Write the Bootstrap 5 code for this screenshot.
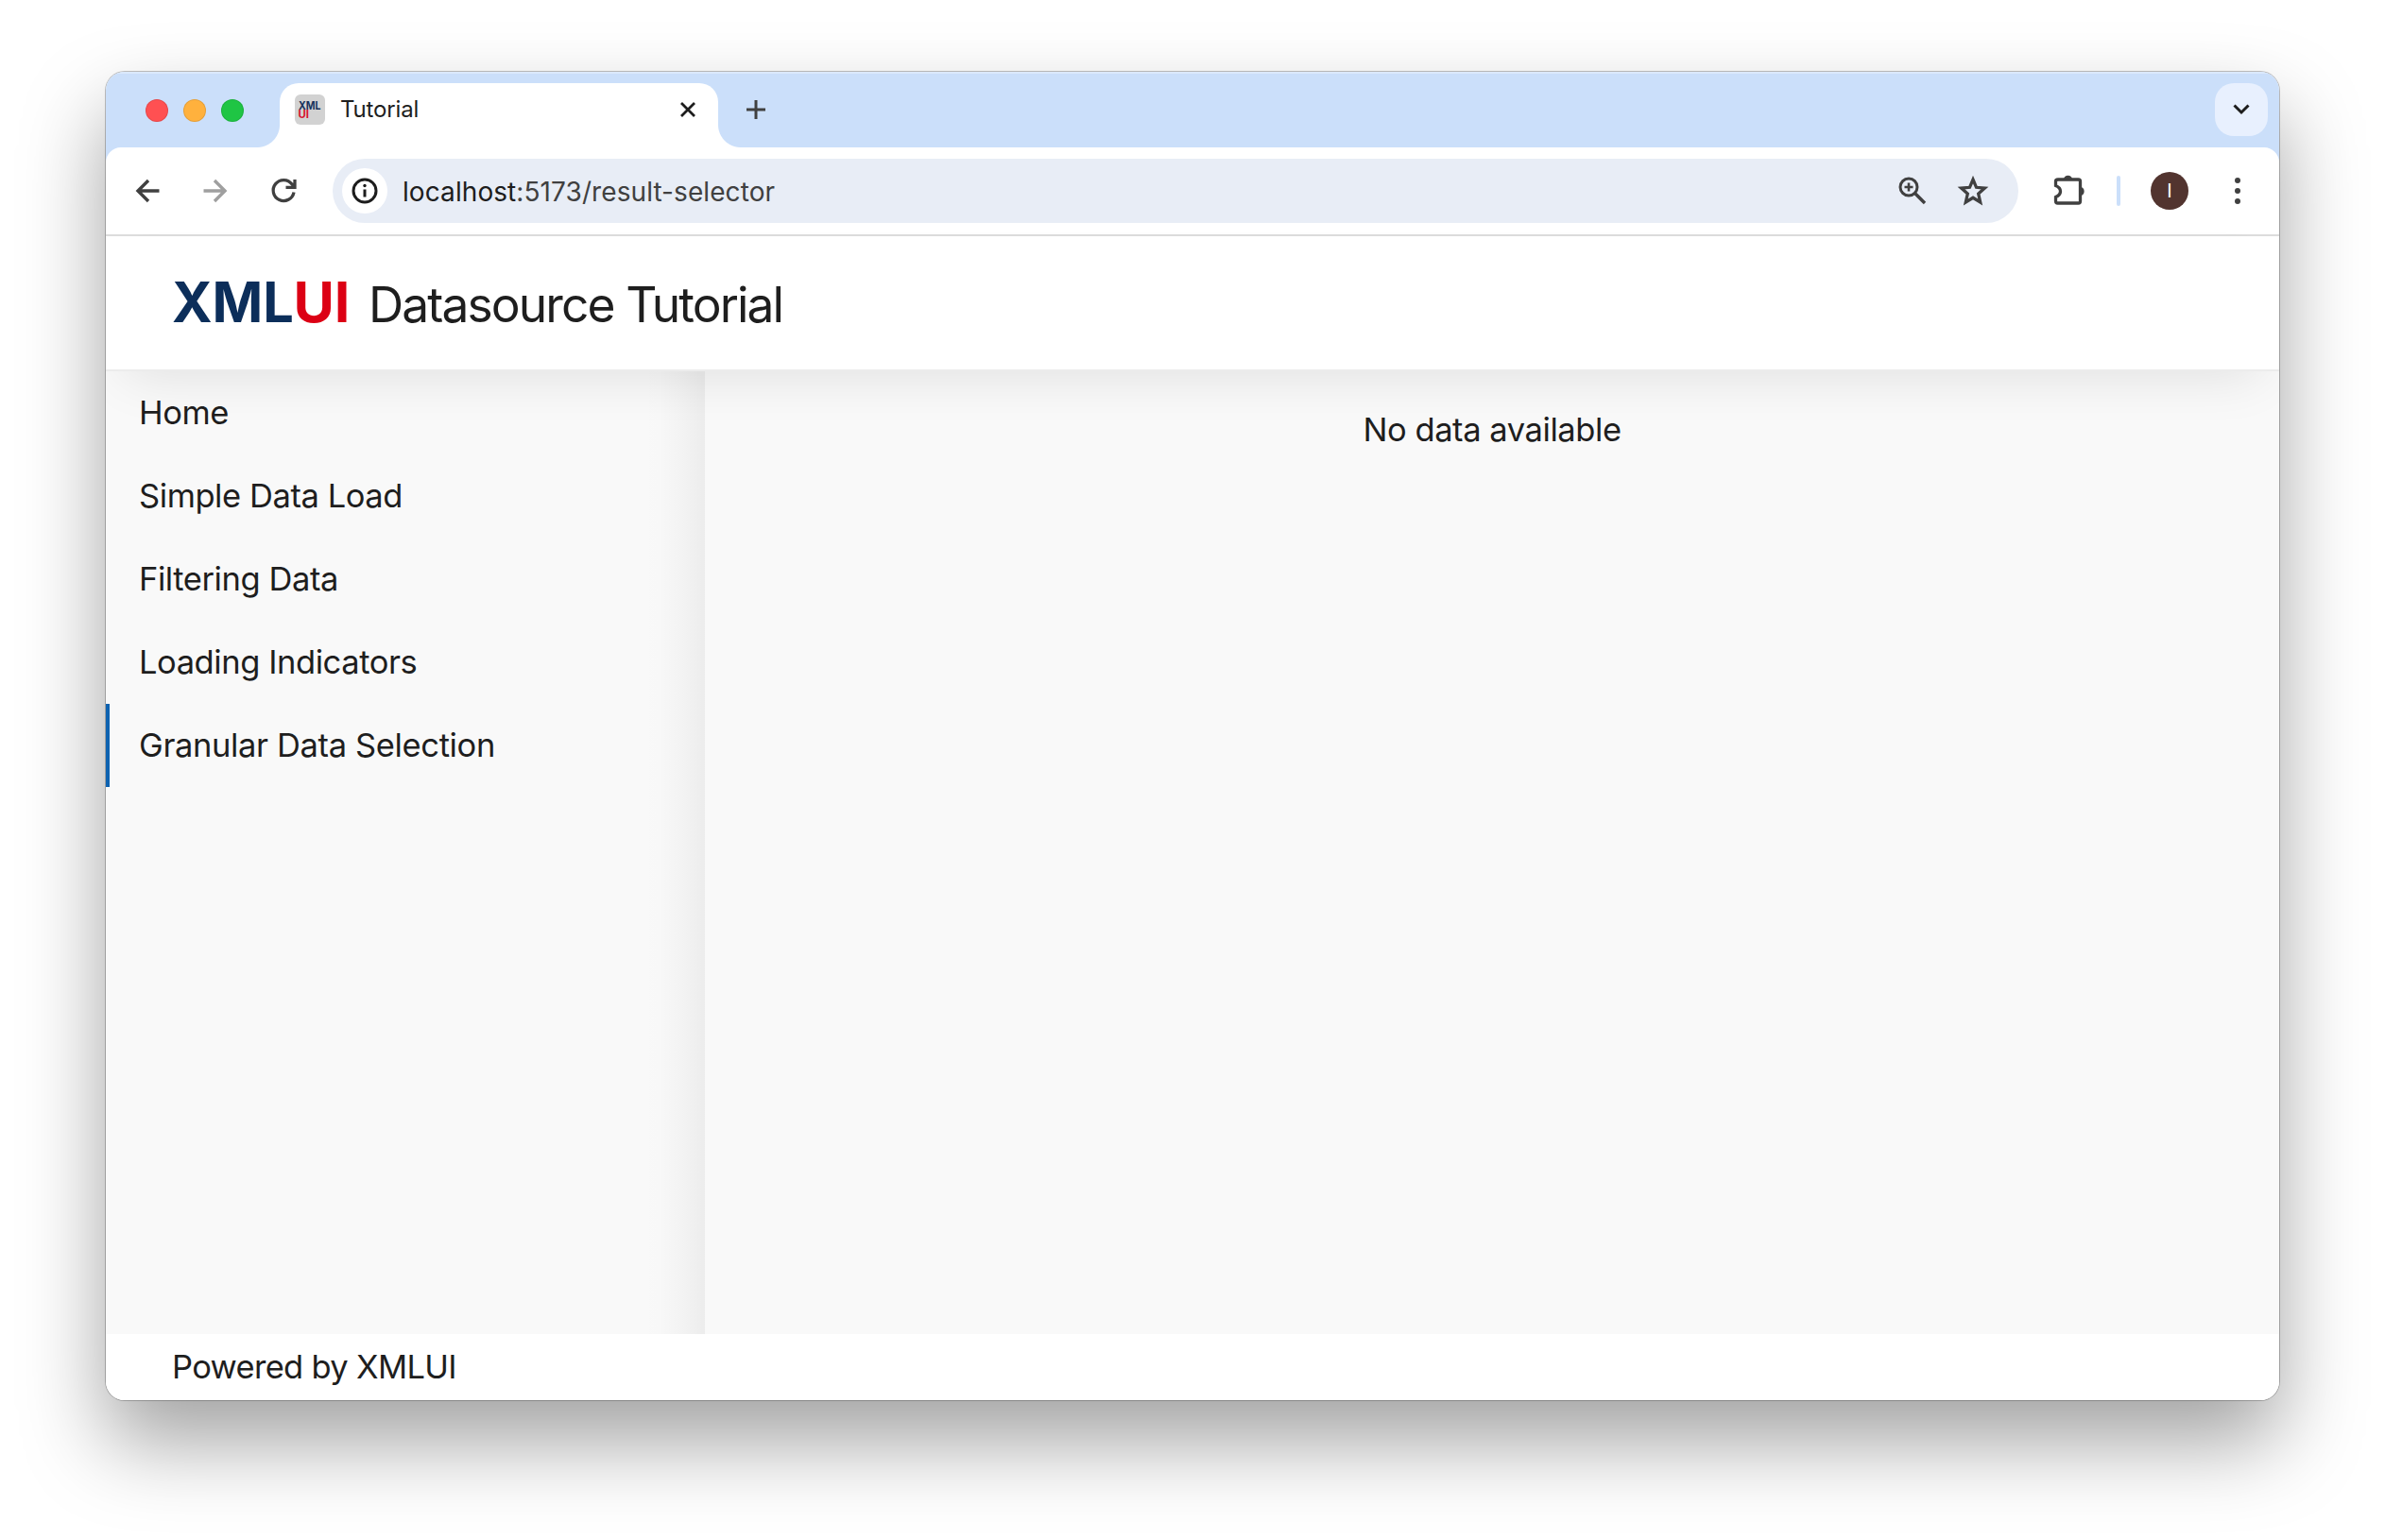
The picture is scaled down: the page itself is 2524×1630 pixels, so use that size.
<!DOCTYPE html>
<html lang="en">
<head>
<meta charset="utf-8">
<meta name="viewport" content="width=device-width, initial-scale=1">
<title>Tutorial</title>
<link href="https://cdn.jsdelivr.net/npm/bootstrap@5.3.0/dist/css/bootstrap.min.css" rel="stylesheet">
<style>
body{background:#fff;font-family:Inter,"Liberation Sans",sans-serif;color:#1e1e1e;padding:76px 112px 0;overflow:hidden;height:1630px}
svg{display:block;flex:none}
.window{width:2300px;height:1406px;border-radius:20px;background:#fff;box-shadow:0 0 0 1px rgba(0,0,0,.24),0 44px 88px rgba(0,0,0,.37)}
.clip{border-radius:20px;overflow:hidden;height:100%}
.tabstrip{height:80px;background:#cbdffa;padding:12px 12px 0 42px;box-shadow:inset 0 2px 0 #dbe9fc}
.lights{padding-top:12px}
.light{width:24px;height:24px;border-radius:50%;margin-top:5px;box-shadow:inset 0 0 0 1px rgba(0,0,0,.1)}
.light-red{background:#ff5052}
.light-amber{background:#ffb13d}
.light-green{background:#1fc544}
.tab{width:464px;height:68px;background:#fff;border-radius:20px 20px 0 0;margin-left:38px;padding:0 24px 0 16px;position:relative}
.tab::before,.tab::after{content:"";position:absolute;bottom:0;width:24px;height:24px}
.tab::before{left:-24px;background:radial-gradient(circle at 0 0,transparent 23.5px,#fff 24.5px)}
.tab::after{right:-24px;background:radial-gradient(circle at 100% 0,transparent 23.5px,#fff 24.5px)}
.favicon{margin-top:4px}
.tabtitle{font-size:24px;line-height:32px;margin:4px 0 0 16px;letter-spacing:-.15px}
.tabclose{margin-top:12px}
.newtab{margin:18px 0 0 30px}
.tabmenu{width:56px;height:56px;border-radius:20px;background:#e8f0fe}
.toolbarwrap{background:#cbdffa}
.toolbar{height:94px;background:#fff;border-radius:16px 16px 0 0;border-bottom:2px solid #dcdcdc;padding:0 30px}
.navicon{margin-right:44px}
.address{width:1784px;height:68px;border-radius:34px;background:#e8edf6;padding:0 31px 0 10px;margin-left:-6px}
.siteinfo{width:48px;height:48px;border-radius:50%;background:#fff}
.url{font-size:28px;line-height:40px;color:#404040;margin:1px 0 0 16px;letter-spacing:.08px}
.url b{font-weight:400;color:#1d1d1d}
.star{margin-left:32px}
.puzzle{margin:-2px 0 0 36px}
.avatar{width:40px;height:40px;border-radius:50%;background:#52342f;color:#fff;font-size:20px;margin-left:32px}
.sep{width:4px;height:32px;border-radius:2px;background:#cbdffa;margin-left:32px}
.kebab{margin-left:48px}
.apphead{height:143px;border-bottom:2px solid #ececec;padding-left:65px;background:#fff;position:relative;z-index:1;box-shadow:0 24px 56px -20px rgba(0,0,0,.105)}
.title{font-size:51.5px;line-height:60px;letter-spacing:-1.9px;margin:3px 0 0 17px}
.appbody{background:#f9f9f9;height:1019px;font-size:34.5px;letter-spacing:-.43px}
.side{width:634px;background:linear-gradient(to left,rgba(0,0,0,.052),rgba(0,0,0,.022) 26px,rgba(0,0,0,.005) 50px,transparent 68px)}
.side .nav-link{height:88px;padding:0 0 0 31px;border-left:4px solid transparent;color:#1e1e1e;line-height:88px}
.side .nav-link.active{border-color:#0d62b0;letter-spacing:-.36px}
.content{padding-top:36px}
.appfoot{height:70px;background:#fff;padding-left:70px;font-size:34.5px;letter-spacing:-.68px}
</style>
<script src="https://cdn.jsdelivr.net/npm/bootstrap@5.3.0/dist/js/bootstrap.bundle.min.js"></script>
</head>
<body>
<div class="window"><div class="clip d-flex flex-column">
  <div class="tabstrip d-flex align-items-start">
    <div class="lights d-flex gap-3">
      <span class="light light-red"></span>
      <span class="light light-amber"></span>
      <span class="light light-green"></span>
    </div>
    <div class="tab d-flex align-items-start pt-2">
      <svg class="favicon" width="32" height="32" viewBox="0 0 32 32"><rect y="4" width="0" height="0"/><rect width="32" height="32" rx="6" fill="#d2d2d2"/><g font-family="Inter" font-weight="700" font-size="11.5"><text x="4" y="15.8" fill="#16325c" textLength="23.5" lengthAdjust="spacingAndGlyphs">XML</text><text x="3.5" y="24.8" fill="#d8102c" textLength="11.5" lengthAdjust="spacingAndGlyphs">UI</text></g></svg>
      <span class="tabtitle">Tutorial</span>
      <svg class="tabclose ms-auto" width="16" height="16" viewBox="0 0 16 16" stroke="#1d1d1d" stroke-width="2.8"><path d="M1 1L15 15M15 1L1 15"/></svg>
    </div>
    <svg class="newtab" width="20" height="20" viewBox="0 0 20 20" stroke="#404040" stroke-width="3"><path d="M0 10H20M10 0V20"/></svg>
    <div class="tabmenu ms-auto d-flex align-items-center justify-content-center"><svg width="18" height="12" viewBox="0 0 18 12" fill="none" stroke="#1d1d1d" stroke-width="3"><path d="M1.5 1.5L9 9L16.5 1.5"/></svg></div>
  </div>
  <div class="toolbarwrap"><div class="toolbar d-flex align-items-center">
    <svg class="navicon" width="28" height="28" viewBox="0 0 28 28" fill="none" stroke="#404040" stroke-width="3.4"><path d="M26.5 14H4.5M15 3L4 14L15 25"/></svg>
    <svg class="navicon" width="28" height="28" viewBox="0 0 28 28" fill="none" stroke="#9f9f9f" stroke-width="3.4"><path d="M1.5 14H23.5M13 3L24 14L13 25"/></svg>
    <svg class="navicon" width="28" height="28" viewBox="0 0 28 28" fill="none" stroke="#404040" stroke-width="3.3"><path d="M25 15.5A11 11 0 1 1 23 7L25.5 9.5M26 2V10.3H16.5"/></svg>
    <div class="address d-flex align-items-center">
      <span class="siteinfo d-flex align-items-center justify-content-center"><svg width="28" height="28" viewBox="0 0 28 28"><circle cx="14" cy="14" r="12" fill="none" stroke="#1d1d1d" stroke-width="3"/><path d="M14 12.5V20.5" stroke="#1d1d1d" stroke-width="3"/><circle cx="14" cy="8.5" r="1.7" fill="#1d1d1d"/></svg></span>
      <span class="url"><b>localhost</b>:5173/result-selector</span>
      <svg class="ms-auto" width="30" height="30" viewBox="0 0 30 30" fill="none" stroke="#404040" stroke-width="3"><circle cx="11" cy="11" r="9"/><path d="M17.5 17.5L28 28" stroke-width="3.4"/><path d="M6.5 11H15.5M11 6.5V15.5" stroke-width="2.6"/></svg>
      <svg class="star" width="34" height="32" viewBox="0 0 34 32" fill="none" stroke="#404040" stroke-width="3.3"><path d="M17 4L20.5 12.3L29.4 13L22.7 19L24.7 28L17 23.3L9.3 28L11.3 19L4.6 13L13.5 12.3Z"/></svg>
    </div>
    <svg class="puzzle" width="36" height="36" viewBox="0 0 36 36"><path d="M6 7H27.5Q29.5 7 29.5 9V30Q29.5 32 27.5 32H5.500Q3.500 32 3.500 30V25.500Q8.500 23.500 8.500 19.500Q8.500 15.500 3.500 13.500V9Q3.500 7 6 7Z" fill="none" stroke="#404040" stroke-width="3.3"/><path d="M12 6.500A4.600 4.600 0 0 1 21 6.500ZM30 15A4.600 4.600 0 0 1 30 24Z" fill="#404040"/></svg>
    <span class="sep"></span>
    <span class="avatar d-flex align-items-center justify-content-center">I</span>
    <svg class="kebab" width="8" height="28" viewBox="0 0 8 28" fill="#404040"><circle cx="4" cy="3" r="3"/><circle cx="4" cy="14" r="3"/><circle cx="4" cy="25" r="3"/></svg>
  </div></div>
  <header class="apphead d-flex align-items-center">
    <svg width="196" height="80" viewBox="0 0 196 80" font-family="Inter" font-weight="700" font-size="59"><text x="5" y="60" fill="#0c2e5a" textLength="129" lengthAdjust="spacingAndGlyphs">XML</text><text x="133.5" y="60" fill="#dc0014" textLength="60" lengthAdjust="spacingAndGlyphs">UI</text></svg>
    <span class="title">Datasource Tutorial</span>
  </header>
  <div class="appbody d-flex">
    <nav class="side nav flex-column flex-nowrap">
      <a class="nav-link" href="#">Home</a>
      <a class="nav-link" href="#">Simple Data Load</a>
      <a class="nav-link" href="#">Filtering Data</a>
      <a class="nav-link" href="#">Loading Indicators</a>
      <a class="nav-link active" href="#">Granular Data Selection</a>
    </nav>
    <main class="content flex-fill text-center">No data available</main>
  </div>
  <footer class="appfoot d-flex align-items-center">Powered by XMLUI</footer>
</div></div>
</body>
</html>
